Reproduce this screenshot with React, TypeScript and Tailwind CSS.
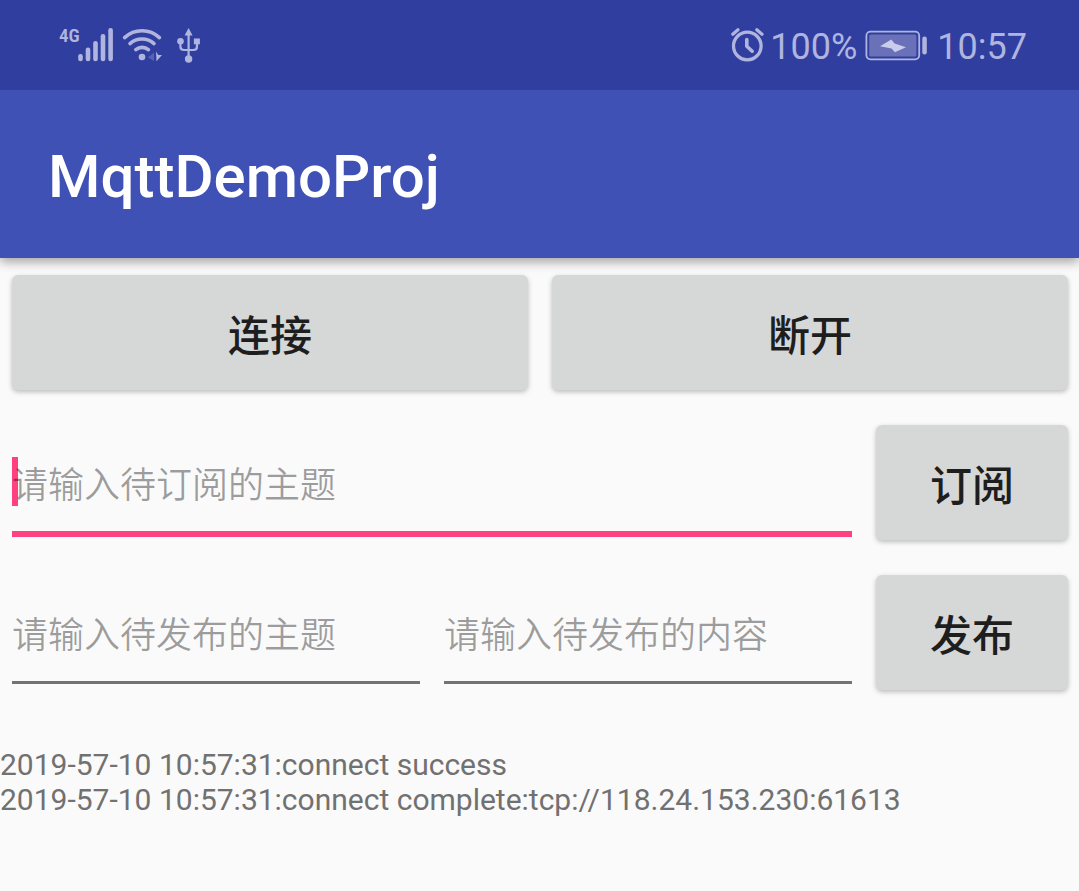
import React, { useState } from "react";

function SignalIcon() {
  return (
    <svg className="h-9 w-9" viewBox="78 27 36 36" fill="currentColor" aria-hidden="true">
      <rect x="78.2" y="54" width="4.6" height="7.3" rx="2.2" />
      <rect x="85.7" y="47.5" width="4.6" height="13.8" rx="2.2" />
      <rect x="93.2" y="41" width="4.6" height="20.3" rx="2.2" />
      <rect x="100.7" y="34" width="4.6" height="27.3" rx="2.2" />
      <rect x="108.3" y="28" width="4.6" height="33.3" rx="2.2" />
    </svg>
  );
}

function WifiIcon() {
  return (
    <svg className="h-9 w-11" viewBox="120 27 44 36" fill="none" aria-hidden="true">
      <g stroke="currentColor" strokeWidth="3.6" strokeLinecap="round">
        <path d="M124.6 37.6A25.4 25.4 0 0 1 159.4 37.6" />
        <path d="M130 43.6A18 18 0 0 1 154 43.6" />
        <path d="M135.8 49.6A10 10 0 0 1 148.4 49.6" />
      </g>
      <circle cx="142" cy="57" r="3.3" fill="currentColor" />
      <path d="M148 57.5L154 52.5V61Z" fill="currentColor" opacity="0.3" />
      <path d="M156 51.5L158.3 55H162L156.5 61.3Z" fill="currentColor" />
    </svg>
  );
}

function UsbIcon() {
  return (
    <svg className="h-9 w-6" viewBox="176 27 24 36" fill="none" aria-hidden="true">
      <g stroke="currentColor" strokeWidth="2.2">
        <path d="M188.6 33V58" />
        <path d="M180.4 42V46.5Q180.4 50 184 50H193.5Q197 50 197 46.5V42" />
      </g>
      <g fill="currentColor">
        <path d="M188.6 28L192.6 35.4H184.6Z" />
        <circle cx="180.5" cy="41.3" r="3.3" />
        <rect x="193.9" y="38.5" width="6" height="5.8" />
        <circle cx="188.6" cy="59" r="3.7" />
      </g>
    </svg>
  );
}

function AlarmIcon() {
  return (
    <svg className="h-9 w-9" viewBox="729 28 36 36" fill="none" stroke="currentColor" strokeLinecap="round" strokeLinejoin="round" aria-hidden="true">
      <circle cx="747.3" cy="47" r="13.8" strokeWidth="3.3" />
      <path d="M732.8 35.2L738 30.7M756.8 30.7L762 35.2" strokeWidth="3.2" />
      <path d="M746.8 40.5V47.2L752.2 52.2" strokeWidth="3.6" />
    </svg>
  );
}

function BatteryIcon() {
  return (
    <svg className="h-8 w-16" viewBox="865 29 64 32" fill="none" aria-hidden="true">
      <rect x="866.4" y="31.7" width="52.8" height="27.6" rx="4" stroke="currentColor" strokeWidth="1.8" />
      <rect x="869.2" y="34.6" width="47.2" height="21.8" rx="1.5" fill="#6a71b8" />
      <path d="M880 46.2L891.3 39.5L894.6 43.6L906 47.3L894.9 52.2L891.6 48.4Z" fill="#c9cceb" />
      <rect x="922.3" y="36.6" width="4.5" height="17.8" rx="2.2" fill="currentColor" />
    </svg>
  );
}

function StatusBar() {
  return (
    <div className="flex h-[90px] items-center justify-between bg-[#303f9f] pl-[59px] pr-[52px] text-[#b0b5df]">
      <div className="flex items-center">
        <span className="w-[19px] self-start font-['Roboto_Condensed',Roboto,sans-serif] text-[19px] leading-[18px] font-semibold">4G</span>
        <SignalIcon />
        <div className="flex pl-[6px]">
          <WifiIcon />
        </div>
        <div className="flex pl-3">
          <UsbIcon />
        </div>
      </div>
      <div className="flex items-center text-[36px] leading-[42px]">
        <AlarmIcon />
        <span className="pt-1 pl-[5px]">100%</span>
        <div className="flex pl-2 pr-2">
          <BatteryIcon />
        </div>
        <time className="pt-1">10:57</time>
      </div>
    </div>
  );
}

function RaisedButton({ children, className = "", onClick }: { children: React.ReactNode; className?: string; onClick?: () => void }) {
  return (
    <button
      type="button"
      onClick={onClick}
      className={
        "flex h-[115px] items-center justify-center rounded-md bg-[#d6d7d7] pt-2 text-[42px] leading-[60px] font-medium text-[#1e1e1e] shadow-[0_2px_5px_rgba(0,0,0,0.25)] " +
        className
      }
    >
      {children}
    </button>
  );
}

function TextField({ label, active = false }: { label: string; active?: boolean }) {
  const [value, setValue] = useState("");
  return (
    <label className="relative flex h-[115px] min-w-0 flex-1 flex-col">
      {active && value === "" && <span className="absolute top-8 left-0 h-[49px] w-[6px] bg-[#ff4081]" />}
      <input
        type="text"
        aria-label={label}
        placeholder={label}
        value={value}
        onChange={(event) => setValue(event.target.value)}
        className={
          "relative w-full bg-transparent pt-4 text-[36px] font-[350] text-[#212121] outline-none placeholder:text-black/38 " +
          (active ? "h-28 border-b-6 border-[#ff4081]" : "h-[109px] border-b-3 border-[#737373]")
        }
      />
    </label>
  );
}

const initialLog = [
  "2019-57-10 10:57:31:connect success",
  "2019-57-10 10:57:31:connect complete:tcp://118.24.153.230:61613",
];

export default function App() {
  const [log] = useState(initialLog);
  return (
    <div className="min-h-screen bg-[#fafafa] font-[Roboto,'Noto_Sans_CJK_SC',sans-serif]">
      <div className="relative shadow-[0_4px_10px_rgba(0,0,0,0.35)]">
        <StatusBar />
        <header className="flex h-[168px] items-center bg-[#3f51b5] px-12 pt-[6px]">
          <h1 className="text-[60px] leading-[70px] font-medium text-white">MqttDemoProj</h1>
        </header>
      </div>
      <main>
        <div className="flex flex-col gap-[35px] pt-[17px] pr-[11px] pl-3">
          <div className="flex gap-6">
            <RaisedButton className="flex-1">连接</RaisedButton>
            <RaisedButton className="flex-1">断开</RaisedButton>
          </div>
          <div className="flex gap-6">
            <TextField label="请输入待订阅的主题" active />
            <RaisedButton className="w-48">订阅</RaisedButton>
          </div>
          <div className="flex gap-6">
            <TextField label="请输入待发布的主题" />
            <TextField label="请输入待发布的内容" />
            <RaisedButton className="w-48">发布</RaisedButton>
          </div>
        </div>
        <div role="log" className="pt-[57px] text-[30px] leading-[35px] text-[#717171]">
          {log.map((line) => (
            <p key={line}>{line}</p>
          ))}
        </div>
      </main>
    </div>
  );
}
